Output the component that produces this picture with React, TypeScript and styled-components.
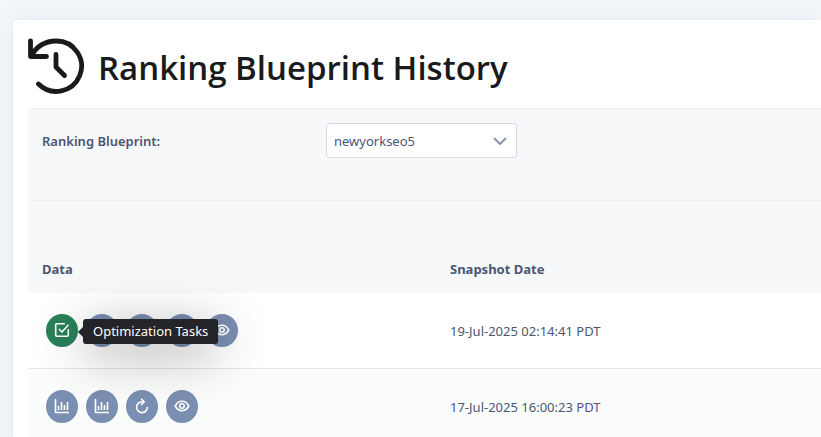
import React from "react";
import styled, { createGlobalStyle, css } from "styled-components";

const GlobalStyle = createGlobalStyle`
  *, *::before, *::after { box-sizing: border-box; }
  html { height: 100%; overflow: hidden; }
  body {
    margin: 0;
    min-height: 100%;
    background: #f3f7fa;
    color: #4a5673;
    font: 400 13px/20px "Noto Sans", "Segoe UI", sans-serif;
  }
`;

const Page = styled.main`
  padding: 20px 0 0 13px;
`;

const Card = styled.section`
  min-height: calc(100vh - 20px);
  padding: 15px 0 0 15px;
  background: #fff;
  border-top-left-radius: 4px;
  box-shadow: 0 0 28px rgba(60, 90, 110, 0.07), 0 0 2px rgba(60, 70, 90, 0.08);
`;

const Header = styled.header`
  display: flex;
  align-items: center;
  gap: 12px;
  height: 73px;
  padding-bottom: 14px;
`;

const Title = styled.h1`
  margin: 0;
  padding-top: 6px;
  color: #191a1c;
  font: 600 33px/48px "Open Sans", "Segoe UI", sans-serif;
  white-space: nowrap;
`;

const Filters = styled.form`
  display: grid;
  grid-template-columns: 284px 191px;
  align-items: start;
  height: 93px;
  padding: 14px;
  background: #f6f8fa;
  border-top: 1px solid #eceff3;
  border-bottom: 1px solid #eff1f4;
  border-top-left-radius: 3px;
`;

const FilterLabel = styled.label`
  padding-top: 8px;
  font-weight: 600;
`;

const SelectBox = styled.div`
  display: grid;
  align-items: center;

  & > * { grid-area: 1 / 1; }
  & > svg { justify-self: end; margin-right: 10px; pointer-events: none; }
`;

const Select = styled.select`
  appearance: none;
  width: 100%;
  height: 35px;
  padding: 0 30px 0 7px;
  border: 1px solid #d5dbe7;
  border-radius: 3px;
  background: #fff;
  color: inherit;
  font: inherit;
`;

const Table = styled.table`
  width: 100%;
  border-spacing: 0;
  table-layout: fixed;
`;

const HeadCell = styled.th<{ $width?: string }>`
  width: ${({ $width }) => $width ?? "auto"};
  height: 92px;
  padding: 0 14px 14px;
  background: #f6f8fa;
  font-weight: 700;
  text-align: left;
  vertical-align: bottom;
`;

const Row = styled.tr`
  &:nth-child(even) { background: #fbfdfc; }
`;

const Cell = styled.td`
  height: 76px;
  padding: 0 14px;
  border-bottom: 1px solid #e4e8e8;
`;

const Actions = styled.div`
  display: flex;
  gap: 8px;
  margin-left: 4px;
`;

const Action = styled.div`
  position: relative;
`;

const ActionButton = styled.button<{ $active?: boolean }>`
  display: flex;
  align-items: center;
  justify-content: center;
  width: 32px;
  height: 33px;
  padding: 0 0 2px;
  border: 0;
  border-radius: 50%;
  background: #7b8fb2;
  color: #fff;
  cursor: pointer;
  ${({ $active }) => $active && css`background: #2a8058;`}
`;

const Tooltip = styled.div`
  position: absolute;
  z-index: 1;
  top: 5px;
  left: 100%;
  margin-left: 5px;
  padding: 2px 10px 3px;
  border-radius: 3px;
  background: #232428;
  color: #fff;
  white-space: nowrap;
  box-shadow: 0 10px 50px rgba(0, 0, 0, 0.38);

  &::before {
    content: "";
    position: absolute;
    top: 8px;
    right: 100%;
    border: solid transparent;
    border-width: 5px 5px 5px 0;
    border-right-color: #232428;
  }
`;

type IconName = "check" | "chart" | "refresh" | "eye";

const paths: Record<IconName, React.ReactNode> = {
  check: (
    <>
      <path d="M14.3 7.2v6.1a1 1 0 0 1-1 1H2.7a1 1 0 0 1-1-1V2.7a1 1 0 0 1 1-1h8.2" />
      <path d="m5 7 3 3 6.5-7.2" />
    </>
  ),
  chart: <path d="M1.5 1v13.5H15M4.5 12V8M7.5 12V4M10.5 12V7M13.5 12V4" />,
  refresh: (
    <>
      <path d="M9.5 3.8H7.6A5.4 5.4 0 1 0 13.4 9" />
      <path d="M7.1.8 10.2 3.8 7.1 6.9" />
    </>
  ),
  eye: (
    <>
      <path d="M1.2 8C2.8 5 5.2 3.3 8 3.3S13.2 5 14.8 8C13.2 11 10.8 12.7 8 12.7S2.8 11 1.2 8Z" />
      <circle cx="8" cy="8" r="2.2" />
    </>
  ),
};

const Icon = ({ name }: { name: IconName }) => (
  <svg width="16" height="16" viewBox="0 0 16 16" fill="none" stroke="currentColor"
    strokeWidth="1.6" strokeLinejoin="round" aria-hidden="true">
    {paths[name]}
  </svg>
);

const HistoryIcon = () => (
  <svg width="58" height="58" viewBox="0 0 58 58" fill="none" stroke="#191a1c"
    strokeWidth="4.8" strokeLinecap="round" strokeLinejoin="round" aria-hidden="true">
    <path d="M2.5 4.8V20.5H18.5M3.6 19.8C8 10.5 17.2 5 28 5A25.2 25.2 0 1 1 10.5 48" />
    <path d="M28 18.5V31L36.5 39.5" />
  </svg>
);

interface ActionItem { icon: IconName; label: string; tip?: boolean }

const rows: { date: string; actions: ActionItem[] }[] = [
  {
    date: "19-Jul-2025 02:14:41 PDT",
    actions: [
      { icon: "check", label: "Optimization Tasks", tip: true },
      { icon: "chart", label: "Chart" },
      { icon: "chart", label: "Comparison chart" },
      { icon: "refresh", label: "Refresh" },
      { icon: "eye", label: "View" },
    ],
  },
  {
    date: "17-Jul-2025 16:00:23 PDT",
    actions: [
      { icon: "chart", label: "Chart" },
      { icon: "chart", label: "Comparison chart" },
      { icon: "refresh", label: "Refresh" },
      { icon: "eye", label: "View" },
    ],
  },
];

export default function App() {
  return (
    <Page>
      <GlobalStyle />
      <Card>
        <Header>
          <HistoryIcon />
          <Title>Ranking Blueprint History</Title>
        </Header>
        <Filters>
          <FilterLabel htmlFor="blueprint">Ranking Blueprint:</FilterLabel>
          <SelectBox>
            <Select id="blueprint" defaultValue="newyorkseo5">
              <option value="newyorkseo5">newyorkseo5</option>
            </Select>
            <svg width="14" height="10" viewBox="0 0 14 10" fill="none" stroke="#8391a8" strokeWidth="1.8" aria-hidden="true">
              <path d="m1 2 6 6 6-6" />
            </svg>
          </SelectBox>
        </Filters>
        <Table>
          <thead>
            <tr>
              <HeadCell $width="408px">Data</HeadCell>
              <HeadCell>Snapshot Date</HeadCell>
            </tr>
          </thead>
          <tbody>
            {rows.map((row) => (
              <Row key={row.date}>
                <Cell>
                  <Actions>
                    {row.actions.map((a) => (
                      <Action key={a.label}>
                        <ActionButton type="button" $active={a.tip} aria-label={a.label}>
                          <Icon name={a.icon} />
                        </ActionButton>
                        {a.tip && <Tooltip role="tooltip">{a.label}</Tooltip>}
                      </Action>
                    ))}
                  </Actions>
                </Cell>
                <Cell>{row.date}</Cell>
              </Row>
            ))}
          </tbody>
        </Table>
      </Card>
    </Page>
  );
}
